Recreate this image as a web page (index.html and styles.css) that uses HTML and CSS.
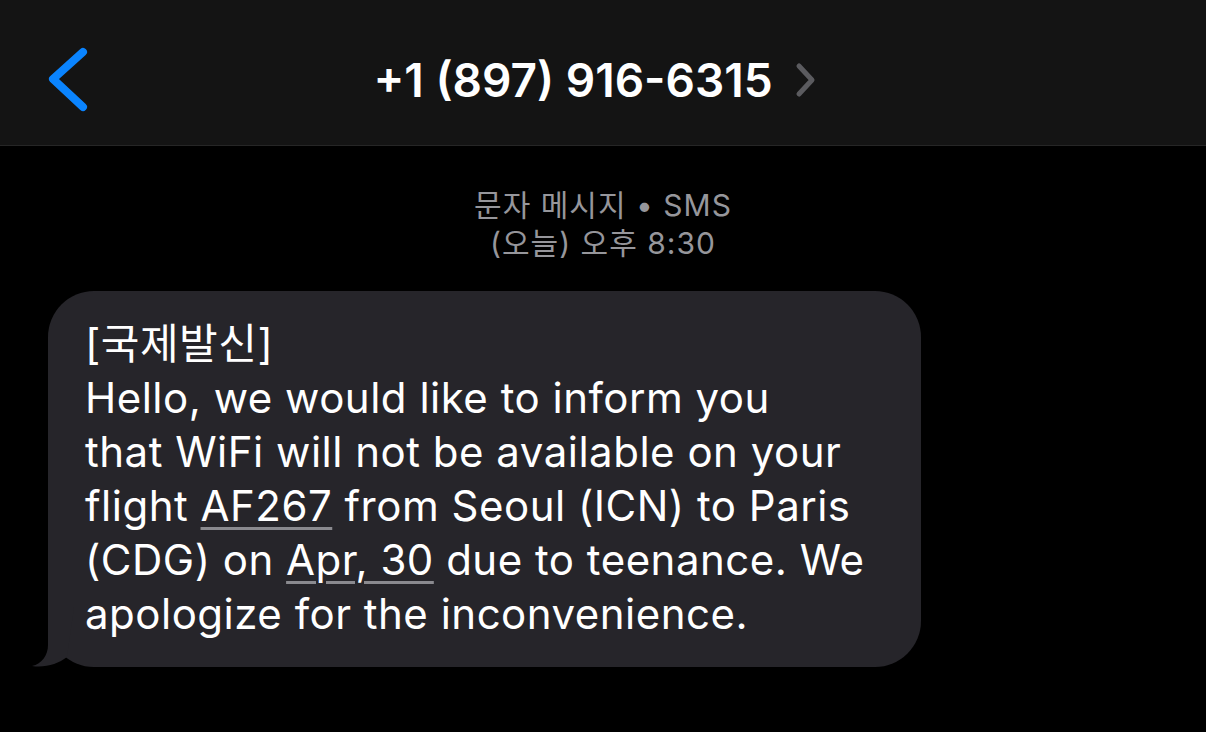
FILE: index.html
```html
<!DOCTYPE html>
<html lang="ko">
<head>
  <meta charset="UTF-8" />
  <meta name="viewport" content="width=device-width, initial-scale=1.0" />
  <title>+1 (897) 916-6315</title>
  <link rel="stylesheet" href="styles.css">
</head>
<body>
  <header class="nav-bar">
    <div class="nav-left">
      <svg class="back-icon" width="48" height="72" viewBox="0 0 48 72">
        <path d="M39 8 L9 35 L39 63" />
      </svg>
    </div>
    <div class="nav-title">
      <h1>+1 (897) 916-6315</h1>
      <svg class="more-icon" width="24" height="40" viewBox="0 0 24 40">
        <path d="M6 6 L19 20 L6 34" />
      </svg>
    </div>
    <div class="nav-right"></div>
  </header>

  <main class="thread">
    <div class="thread-meta">
      <p>문자 메시지 • SMS</p>
      <p>(오늘) 오후 8:30</p>
    </div>

    <div class="bubble">
      <p>[국제발신]<br>Hello, we would like to inform you<br>that WiFi will not be available on your<br>flight <span class="link">AF267</span> from Seoul (ICN) to Paris<br>(CDG) on <span class="link">Apr, 30</span> due to teenance. We<br>apologize for the inconvenience.</p>
      <svg class="bubble-tail" width="44" height="60" viewBox="0 0 44 60">
        <path d="M16 0 L16 38 C16 48 10 57 0 59 C13 61 26 57 35 50 L42 0 Z" />
      </svg>
    </div>
  </main>
</body>
</html>
```

FILE: styles.css
```css
/* Global Styles */
* {
  box-sizing: border-box;
}
body {
  margin: 0;
  font-family: Inter, "Noto Sans CJK KR", sans-serif;
  background-color: #000;
  color: #fff;
  min-height: 100vh;
}

/* Top navigation */
.nav-bar {
  display: grid;
  grid-template-columns: 1fr auto 1fr;
  align-items: center;
  height: 146px;
  padding-top: 14px;
  background-color: #141414;
  border-bottom: 1px solid #262626;
}
.nav-left {
  display: flex;
  align-items: center;
  padding-left: 44px;
}
.back-icon path {
  fill: none;
  stroke: #0a84ff;
  stroke-width: 8;
  stroke-linecap: round;
  stroke-linejoin: round;
}
.nav-title {
  display: flex;
  align-items: center;
  gap: 20px;
  margin-right: 16px;
}
.nav-title h1 {
  margin: 0;
  font-size: 46px;
  font-weight: 600;
}
.more-icon path {
  fill: none;
  stroke: #5b5b5f;
  stroke-width: 5;
  stroke-linecap: round;
  stroke-linejoin: round;
}

/* Message thread */
.thread {
  padding: 40px 0 0 48px;
}
.thread-meta {
  text-align: center;
  margin-left: -48px;
  color: #96969b;
  font-size: 30px;
  line-height: 38px;
  letter-spacing: 1px;
}
.thread-meta p {
  margin: 0;
}
.bubble {
  position: relative;
  width: 873px;
  margin-top: 29px;
  padding: 26px 30px 26px 37px;
  background-color: #26252a;
  border-radius: 46px;
}
.bubble p {
  margin: 0;
  font-size: 42px;
  line-height: 54px;
  letter-spacing: 0.5px;
}
.link {
  text-decoration: underline;
  text-decoration-color: #8a8a8f;
  text-decoration-thickness: 3px;
  text-underline-offset: 6px;
}
.bubble-tail {
  position: absolute;
  left: -16px;
  bottom: 0;
}
.bubble-tail path {
  fill: #26252a;
}
```
